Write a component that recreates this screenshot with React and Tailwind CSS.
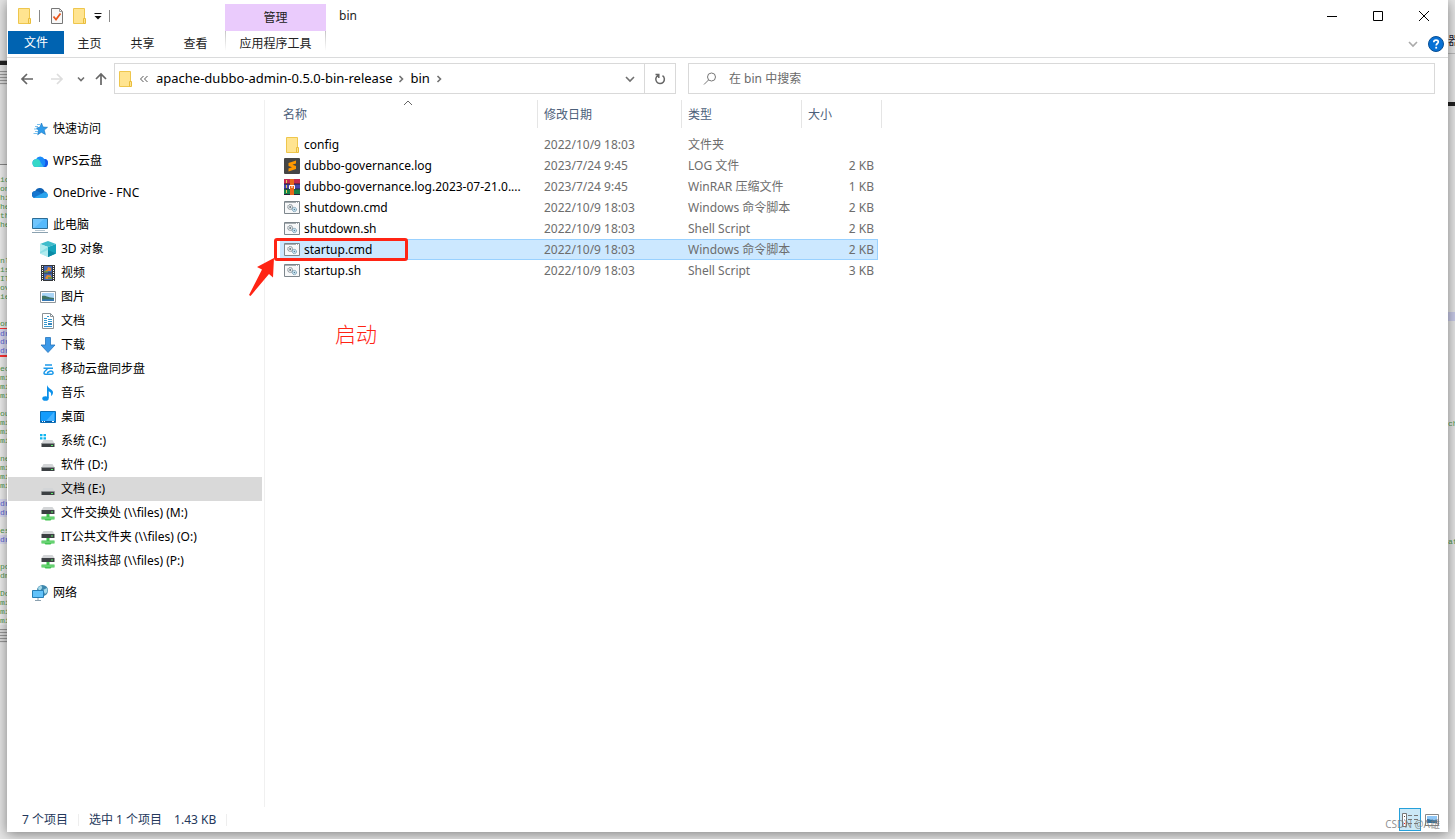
import { useState } from 'react'

const files = [
  { name: 'config', date: '2022/10/9 18:03', type: '文件夹', size: '', icon: 'folder' },
  { name: 'dubbo-governance.log', date: '2023/7/24 9:45', type: 'LOG 文件', size: '2 KB', icon: 'sublime' },
  { name: 'dubbo-governance.log.2023-07-21.0....', date: '2023/7/24 9:45', type: 'WinRAR 压缩文件', size: '1 KB', icon: 'rar' },
  { name: 'shutdown.cmd', date: '2022/10/9 18:03', type: 'Windows 命令脚本', size: '2 KB', icon: 'script' },
  { name: 'shutdown.sh', date: '2022/10/9 18:03', type: 'Shell Script', size: '2 KB', icon: 'script' },
  { name: 'startup.cmd', date: '2022/10/9 18:03', type: 'Windows 命令脚本', size: '2 KB', icon: 'script' },
  { name: 'startup.sh', date: '2022/10/9 18:03', type: 'Shell Script', size: '3 KB', icon: 'script' },
]

const navGroups = [
  [{ label: '快速访问', icon: 'star' }],
  [{ label: 'WPS云盘', icon: 'wps' }],
  [{ label: 'OneDrive - FNC', icon: 'onedrive' }],
  [
    { label: '此电脑', icon: 'pc' },
    { label: '3D 对象', icon: 'cube', child: true },
    { label: '视频', icon: 'video', child: true },
    { label: '图片', icon: 'picture', child: true },
    { label: '文档', icon: 'doc', child: true },
    { label: '下载', icon: 'download', child: true },
    { label: '移动云盘同步盘', icon: 'cloud', child: true },
    { label: '音乐', icon: 'music', child: true },
    { label: '桌面', icon: 'desktop', child: true },
    { label: '系统 (C:)', icon: 'system', child: true },
    { label: '软件 (D:)', icon: 'drive', child: true },
    { label: '文档 (E:)', icon: 'drive', child: true, active: true },
    { label: '文件交换处 (\\\\files) (M:)', icon: 'netdrive', child: true },
    { label: 'IT公共文件夹 (\\\\files) (O:)', icon: 'netdrive', child: true },
    { label: '资讯科技部 (\\\\files) (P:)', icon: 'netdrive', child: true },
  ],
  [{ label: '网络', icon: 'network' }],
]

// Editor text peeking out from behind the window, one entry per line
const codeLines = [
  'ic', 'on', 'hi', 'he', 'th', 'he', '', '', '', 'nl', 'is', 'IT', 'ov', 'ie', '', '',
  'on', '*dr', '*dr', '*dr', '', 'ec', 'mi', 'mi', 'mi', '', 'ou', 'mi', 'mi', 'mi', '',
  'ne', 'mi', 'mi', 'mi', '', '*dr', '*dr', '', 'es', '*dr', '', '', 'po', 'dm', '',
  'Do', 'mi', 'mi', 'mi',
]

const drive = (
  <>
    <path d="M3.500 7h9l2 3.500h-13z" fill="#d3d5d7" />
    <path d="M1.500 10.500h13V14h-13z" fill="#3c4043" />
    <path d="M1.500 10.500h13" stroke="#8c9093" />
    <path d="M11 12h2v1h-2z" fill="#5cf06a" />
  </>
)

const art = {
  folder: (
    <>
      <path d="M2.500.5h11v15h-11z" fill="#ffe490" stroke="#eec64d" />
      <path d="M12.500 10.500h2v5h-2z" fill="#ffe490" stroke="#e9bd3c" />
    </>
  ),
  sublime: (
    <>
      <rect width="16" height="16" rx="1" fill="#454545" />
      <path d="M12 2.500 4.500 5v3L8 9.200l-3.500 1.300v3L12 11V8L8.500 6.800 12 5.500z" fill="#ff9800" />
    </>
  ),
  rar: (
    <>
      <path d="M0 0h16v5H0z" fill="#c42a50" />
      <path d="M0 5h16v5H0z" fill="#4548ad" />
      <path d="M0 10h16v5.500H0z" fill="#168449" />
      <path d="M0 5h16M0 10h16M0 15.500h16" stroke="#29213b" />
      <path d="M6 0h4v16H6z" fill="#e8681c" />
      <path d="M2.500 1v3M2.500 6v3M2.500 11v3" stroke="#e8c95a" />
      <path d="M5.500 10V6.500h5V10M8 6.500V9" fill="none" stroke="#fff" />
    </>
  ),
  script: (
    <>
      <path d="M.5 1.500h15v12H.5z" fill="#f7f8f9" stroke="#7d868c" />
      <path d="M1 2.500h14" stroke="#a6adb1" />
      <path d="M12 2.500h1M14 2.500h1" stroke="#fff" />
      <circle cx="6.200" cy="7" r="2.500" fill="#dfe5e8" stroke="#7b858c" strokeDasharray="1.300 .4" />
      <circle cx="6.200" cy="7" r=".9" fill="#6c777e" />
      <circle cx="10.400" cy="9.500" r="2.100" fill="#cfeaf6" stroke="#6c92aa" strokeDasharray="1.200 .4" />
      <circle cx="10.400" cy="9.500" r=".8" fill="#5a7d93" />
    </>
  ),
  star: (
    <>
      <path d="m9.500 2 1.500 4 4.500.3-3.300 2.800 1.200 4.400-4.100-2.200-3.600 2.500.8-4.400-2-2.400 3.400-.8z" fill="#2f9ceb" stroke="#1372bd" strokeWidth=".6" />
      <path d="M5 3.500h3M3 5.500h3M2 8h3M3 10.500h3M1.500 12.500h4" stroke="#58b1ea" strokeWidth=".8" />
    </>
  ),
  wps: (
    <>
      <path d="M4.800 14A3.900 3.900 0 0 1 4 6.200 4.600 4.600 0 0 1 12.300 6 4 4 0 0 1 11.500 14z" fill="#1a8bfa" />
      <path d="M4.800 14A3.900 3.900 0 0 1 4 6.200c2.500-.6 4 1 4.500 3 .5 2 1.500 4 3 4.800z" fill="#35d8c8" />
      <path d="M5 14c3.500 0 4-3.500 3.500-5l3 5z" fill="#3ab5ef" />
      <path d="M12.300 6A4 4 0 0 1 11.500 14c2-1.500 2.500-5 .8-8z" fill="#1556e8" />
    </>
  ),
  onedrive: (
    <>
      <path d="M3.500 13A3.500 3.500 0 0 1 3.200 6 5 5 0 0 1 12.500 6.500a3.300 3.300 0 0 1 .3 6.500z" fill="#0f62b5" />
      <path d="M3 6.200C6 5.500 8 7.800 10 9l-7.500 4A3.500 3.500 0 0 1 3 6.200z" fill="#1576cf" />
      <path d="m2 12.500 8-4c3-2.500 6-.5 6 1.800a2.700 2.700 0 0 1-2.700 2.700H3.500z" fill="#2aa4ee" />
    </>
  ),
  pc: (
    <>
      <path d="M.5 1.500h15v10H.5z" fill="#55b9fb" stroke="#2c6c95" />
      <path d="M1 2h11L2 11H1z" fill="#80cdff" opacity=".6" />
      <path d="M3 13.500h10" stroke="#b6c7d2" />
      <path d="M0 15.500h16" stroke="#8ba1b0" />
    </>
  ),
  cube: (
    <>
      <path d="M0 3 8 0l8 3-8 3z" fill="#3fbccb" />
      <path d="M0 3l8 3v10l-8-3.500z" fill="#8fe0e6" />
      <path d="M16 3 8 6v10l8-3.500z" fill="#15a3bb" />
      <path d="M0 3l8 3-8 5zM0 12.500 8 9v7z" fill="#c9f3f5" opacity=".6" />
      <path d="M16 12.500 8 9v7z" fill="#0b8aa5" />
    </>
  ),
  video: (
    <>
      <path d="M1 0h14v16H1z" fill="#34373b" />
      <path d="M4 1h8v6.500H4zM4 8.500h8V15H4z" fill="#4568b5" />
      <path d="M5 5h2l1-3 3 1v3H6zM5 13l2-3 4 .5V14H6z" fill="#df8a32" />
      <path d="M4 6h4v1.500H4zM8 12h4v2H8z" fill="#6d944b" />
      <path d="M2.500 1v15M13.500 1v15" stroke="#fff" strokeDasharray="1 1" />
    </>
  ),
  picture: (
    <>
      <path d="M.5 2.500h15v11H.5z" fill="#fff" stroke="#8e969b" />
      <path d="M2 4h12v8H2z" fill="#a9d5f7" />
      <path d="M2 7c4-1 6 2 12 2v3H2z" fill="#3f7564" />
      <path d="M2 10.500c4-.5 8 0 12-.5v2H2z" fill="#3578b5" />
    </>
  ),
  doc: (
    <>
      <path d="M2.500.5h8l3 3v12h-11z" fill="#fff" stroke="#8a9297" />
      <path d="M10.500.5v3h3" fill="none" stroke="#8a9297" />
      <path d="M7 3.500h2M4 5.500h3M4 7.500h3M8 6.500h4M8 8.500h4M4 9.500h3M4 11.500h3M4 13.500h8" stroke="#3598ce" />
      <path d="M8 10h4v2H8z" fill="#3c87bb" />
    </>
  ),
  download: <path d="M5.500.5h5V8h4.500l-7 7.500L1 8h4.500z" fill="#3c99e8" stroke="#2675bd" strokeWidth=".8" />,
  cloud: (
    <path d="M5 4h7M3.500 7.300h9.500M7.500 7.500C6.500 9.500 4 10 4 12c0 1 1 1.300 2 1.300h5.500c2.300 0 2-3-.3-3.300-2-.2-2.400 1.300-4.200 1.800" fill="none" stroke="#1c99ea" strokeWidth="1.500" />
  ),
  music: (
    <>
      <path d="M7 0c1 4 6 4 6 7.500 0 1.500-1 3-2 3.500 1-4-2-4.500-3-5v7H7z" fill="#0b90ea" />
      <path d="M8 5v8" stroke="#0b90ea" strokeWidth="1.500" />
      <ellipse cx="5.500" cy="13.500" rx="3.200" ry="2.300" fill="#0b90ea" />
    </>
  ),
  desktop: (
    <>
      <path d="M.5 2.500h15v11H.5z" fill="#149cfb" stroke="#0b6eb6" />
      <path d="M14 3 6 12h8z" fill="#45b2ff" />
      <path d="M1 12.500h14" stroke="#0756a1" />
      <path d="M2 12.500h1M4 12.500h1M12 12.500h2" stroke="#fff" />
    </>
  ),
  system: (
    <>
      {drive}
      <path d="M0 1h2.500v2.300H0zM3.500 1H6v2.300H3.500zM0 4.300h2.500v2.300H0zM3.500 4.300H6v2.300H3.500z" fill="#0fb5f0" />
    </>
  ),
  drive,
  netdrive: (
    <>
      <path d="M3.500 2h9l2 3h-13z" fill="#d3d5d7" />
      <path d="M1.500 5h13v4h-13z" fill="#3c4043" />
      <path d="M11 6.500h2v1h-2z" fill="#5cf06a" />
      <path d="M6.500 9h3v2.500h5v3h-3l-1 1h-5l-1-1h-3v-3h5z" fill="#43c451" />
      <path d="M1.500 13h13" stroke="#8be093" />
    </>
  ),
  network: (
    <>
      <circle cx="10.500" cy="5.500" r="5.500" fill="#3c87ad" />
      <path d="M6 3c2-3 5-2 4 0S8 5 7 6zM11 5l4-2c1 3 0 5-2 6z" fill="#a7daea" />
      <path d="M.5 5.500h11v7H.5z" fill="#62c2fa" stroke="#267db5" />
      <path d="M6 13v2M3 15.500h6" stroke="#8ba1b0" />
    </>
  ),
}

function Icon({ name }) {
  return (
    <svg className="size-4 shrink-0" viewBox="0 0 16 16" aria-hidden="true">
      {art[name]}
    </svg>
  )
}

function Chevron({ d, className = 'text-[#707070]' }) {
  return (
    <svg className={`size-2.5 shrink-0 ${className}`} viewBox="0 0 10 10" fill="none" stroke="currentColor" strokeWidth="1.600" aria-hidden="true">
      <path d={d} />
    </svg>
  )
}

const DOWN = 'M1 3l4 4 4-4'
const RIGHT = 'M3.500 2l3 3-3 3'

function TitleBar() {
  return (
    <header className="flex h-[31px] items-start">
      <div className="flex h-[31px] w-[218px] shrink-0 items-center pl-[9px]">
        <Icon name="folder" />
        <span className="ml-[7px] h-3 w-px bg-[#888]" />
        <button className="ml-[9px]" title="属性">
          <svg className="size-4" viewBox="0 0 16 16">
            <path d="M2.500.5h8l3 3v12h-11z" fill="#f8f8f8" stroke="#777" />
            <path d="M10.500.5v3h3" fill="none" stroke="#999" />
            <path d="m4.500 8.500 2.500 3 4.500-6" fill="none" stroke="#e8561d" strokeWidth="1.800" />
          </svg>
        </button>
        <button className="ml-1.5" title="新建文件夹"><Icon name="folder" /></button>
        <button className="ml-1.5" title="自定义快速访问工具栏">
          <svg className="size-2.5" viewBox="0 0 10 10">
            <path d="M1.500 2.500h7" stroke="#111" />
            <path d="M1.500 5h7L5 8.500z" fill="#111" />
          </svg>
        </button>
        <span className="ml-1.5 h-3 w-px bg-[#888]" />
      </div>
      <div className="mt-1 flex h-[27px] w-[101px] shrink-0 items-center justify-center bg-[#eacbfc]">管理</div>
      <h1 className="flex h-[31px] flex-1 items-center pl-[13px]">bin</h1>
      <div className="flex h-[31px] pr-px">
        <button className="flex w-[46px] items-center justify-center" aria-label="最小化">
          <svg className="size-2.5" viewBox="0 0 10 10" stroke="#000"><path d="M0 5.500h10" /></svg>
        </button>
        <button className="flex w-[46px] items-center justify-center" aria-label="最大化">
          <svg className="size-2.5" viewBox="0 0 10 10" stroke="#000" fill="none"><path d="M.5.5h9v9h-9z" /></svg>
        </button>
        <button className="flex w-[46px] items-center justify-center" aria-label="关闭">
          <svg className="size-2.5" viewBox="0 0 10 10" stroke="#000"><path d="m0 0 10 10M10 0 0 10" /></svg>
        </button>
      </div>
    </header>
  )
}

function Ribbon() {
  return (
    <div className="flex h-[27px] items-start border-b border-[#dadbdc] pl-px">
      <button className="h-[23px] w-14 bg-[#0063b1] text-white">文件</button>
      {['主页', '共享', '查看'].map((tab) => (
        <button key={tab} className="h-[26px] w-[53px] pr-0.5">{tab}</button>
      ))}
      <div className="ml-0.5 flex">
        <span className="h-5 w-px bg-linear-to-b from-[#c4c4c4] to-white" />
        <button className="h-[26px] w-[99px]">应用程序工具</button>
        <span className="h-5 w-px bg-linear-to-b from-[#c4c4c4] to-white" />
      </div>
      <div className="ml-auto flex h-[26px] items-center gap-2.5 pr-1">
        <button aria-label="展开功能区"><Chevron d={DOWN} className="text-[#aaa]" /></button>
        <button aria-label="帮助">
          <svg className="size-4" viewBox="0 0 16 16">
            <circle cx="8" cy="8" r="7.500" fill="#0871d5" stroke="#084f94" />
            <path d="M5.800 6.200C5.800 3.300 10.400 3.400 10.300 6 10.200 7.500 8.200 7.600 8.200 9.500" fill="none" stroke="#fff" strokeWidth="1.700" />
            <path d="M7.300 10.800h1.800v1.800H7.300z" fill="#fff" />
          </svg>
        </button>
      </div>
    </div>
  )
}

function Arrow({ d, className, label }) {
  return (
    <button className={className} aria-label={label}>
      <svg className="size-3.5" viewBox="0 0 14 14" fill="none" stroke="currentColor" strokeWidth="1.700"><path d={d} /></svg>
    </button>
  )
}

function AddressBar() {
  const [query, setQuery] = useState('')

  return (
    <div className="flex h-9 items-end pr-[13px]">
      <div className="flex h-[31px] w-[107px] shrink-0 items-center pl-[13px]">
        <Arrow d="M13 7H2M7 2 2 7l5 5" className="text-[#666]" label="后退" />
        <Arrow d="M1 7h11M7 2l5 5-5 5" className="ml-4 text-[#ddd]" label="前进" />
        <button className="ml-3" aria-label="最近浏览的位置"><Chevron d="M2 3.500l3 3 3-3" /></button>
        <Arrow d="M7 13V2M2 7l5-5 5 5" className="ml-2 text-[#666]" label="向上" />
      </div>
      <div className="flex h-[31px] w-[562px] shrink-0 items-center border border-[#d9d9d9] pl-0.5">
        <Icon name="folder" />
        <button className="ml-1.5 w-[17px] text-[#555]" aria-label="上级文件夹">
          <svg className="size-2.5" viewBox="0 0 10 10" fill="none" stroke="currentColor">
            <path d="M4.500 2l-3 3 3 3M8.500 2l-3 3 3 3" />
          </svg>
        </button>
        <button className="text-[13px] text-black">apache-dubbo-admin-0.5.0-bin-release</button>
        <span className="mx-1 flex"><Chevron d={RIGHT} /></span>
        <button className="text-[13px] text-black">bin</button>
        <span className="ml-1 flex"><Chevron d={RIGHT} /></span>
        <button className="ml-auto mr-[9px]" aria-label="以前的位置"><Chevron d={DOWN} /></button>
        <button className="flex h-full w-[31px] items-center justify-center border-l border-[#d9d9d9]" aria-label="刷新">
          <svg className="size-3" viewBox="0 0 12 12" fill="none" stroke="#666" strokeWidth="1.500">
            <path d="M8.500 2.700A4.300 4.300 0 1 1 4 2.500M1.500 1.500h3.300v3.500" />
          </svg>
        </button>
      </div>
      <label className="ml-3 flex h-[31px] flex-1 items-center border border-[#d9d9d9] pl-3.5">
        <svg className="size-3.5 shrink-0" viewBox="0 0 14 14" fill="none" stroke="#777">
          <circle cx="8.500" cy="5" r="4" />
          <path d="M5.500 8 1 12.500" />
        </svg>
        <input
          className="ml-3 min-w-0 flex-1 bg-transparent outline-none placeholder:text-[#6a6a6a]"
          placeholder="在 bin 中搜索"
          aria-label="搜索"
          value={query}
          onChange={(e) => setQuery(e.target.value)}
        />
      </label>
    </div>
  )
}

function NavPane() {
  return (
    <nav className="mt-1.5 flex w-[258px] shrink-0 flex-col gap-2 border-r border-[#f0f0f0] pt-[17px] pl-px text-black">
      {navGroups.map((group) => (
        <ul key={group[0].label}>
          {group.map((item) => (
            <li key={item.label}>
              <a
                href="#"
                className={`flex h-6 w-[254px] items-center gap-[5px] ${item.child ? 'pl-8' : 'pl-6'} ${item.active ? 'bg-[#d9d9d9]' : ''}`}
              >
                <Icon name={item.icon} />
                {item.label}
              </a>
            </li>
          ))}
        </ul>
      ))}
    </nav>
  )
}

function FileList() {
  const [selected, setSelected] = useState('startup.cmd')

  return (
    <main className="relative mt-1.5 min-w-0 flex-1 pl-[15px]">
      <table className="w-[602px] table-fixed border-separate border-spacing-0 text-left">
        <colgroup>
          <col className="w-[258px]" />
          <col className="w-[144px]" />
          <col className="w-[120px]" />
          <col className="w-[76px]" />
          <col className="w-1" />
        </colgroup>
        <thead className="text-[#4c607a]">
          <tr>
            <th className="relative h-7 border-r border-[#e5e5e5] pt-0.5 pl-[3px] font-normal">
              名称
              <svg className="absolute top-0 left-[123px] h-1.5 w-2.5" viewBox="0 0 10 6" fill="none" stroke="#666">
                <path d="m1 5 4-4 4 4" />
              </svg>
            </th>
            <th className="h-7 border-r border-[#e5e5e5] pt-0.5 pl-1.5 font-normal">修改日期</th>
            <th className="h-7 border-r border-[#e5e5e5] pt-0.5 pl-1.5 font-normal">类型</th>
            <th colSpan={2} className="h-7 border-r border-[#e5e5e5] pt-0.5 pl-1.5 font-normal">大小</th>
          </tr>
          <tr><td className="h-1.5" /></tr>
        </thead>
        <tbody className="text-[#6d6d6d]">
          {files.map((f) => {
            const cell = f.name === selected ? 'border-y border-[#99d1ff] bg-[#cce8ff]' : 'border-y border-transparent'
            return (
              <tr key={f.name} onClick={() => setSelected(f.name)}>
                <td className={`h-[21px] pl-1 ${cell}`}>
                  <div className="flex h-[19px] items-center gap-1 whitespace-nowrap text-black">
                    <Icon name={f.icon} />
                    {f.name}
                  </div>
                </td>
                <td className={`pl-1.5 ${cell}`}>{f.date}</td>
                <td className={`pl-1.5 ${cell}`}>{f.type}</td>
                <td className={`border-r pr-[3px] text-right ${cell}`}>{f.size}</td>
                <td />
              </tr>
            )
          })}
        </tbody>
      </table>

      {/* Markup drawn over the list */}
      <div className="absolute top-[138px] left-[9px] h-[23px] w-[134px] rounded-[3px] border-3 border-[#ff2414]" />
      <svg className="absolute top-[158px] -left-4 h-[38px] w-[25px]" viewBox="0 0 25 38" fill="#ff2414">
        <path d="M25 0 8 9l5 2.500L0 37l1.500 1L20 16l4 3.500z" />
      </svg>
      <p className="absolute top-[218px] left-[70px] text-[21px] leading-8 font-light text-[#ff2414]">启动</p>
    </main>
  )
}

function StatusBar() {
  return (
    <footer className="flex h-[25px] shrink-0 items-center pl-[15px] text-[#24385b]">
      <span>7 个项目</span>
      <span className="mx-2.5 h-3 w-px bg-[#eee]" />
      <span>选中 1 个项目</span>
      <span className="ml-3">1.43 KB</span>
      <span className="ml-2.5 h-3 w-px bg-[#eee]" />
      <div className="relative ml-auto flex items-center gap-1 pr-[9px]">
        <button className="flex h-[23px] w-[22px] items-center justify-center border border-[#26a0da] bg-[#cbe8f6]" aria-label="详细信息">
          <svg className="h-3.5 w-4" viewBox="0 0 16 14" fill="none">
            <path d="M.5.5h4v13h-4z" fill="#fff" stroke="#777" />
            <path d="M2 3.500h1" stroke="#444" />
            <path d="M2 7h1" stroke="#4784bd" />
            <path d="M2 10.500h1" stroke="#e22" />
            <path d="M6 2.500h4M12 2.500h4M6 6.500h4M12 6.500h4M6 10.500h4M12 10.500h4" stroke="#777" />
          </svg>
        </button>
        <button aria-label="大缩略图">
          <svg className="h-3 w-3.5" viewBox="0 0 14 12">
            <path d="M.5.5h13v11H.5z" fill="#fff" stroke="#888" />
            <path d="M2 2h10v7H2z" fill="#8fc6f5" />
            <path d="M2 5c4 0 5 2 10 1v3H2z" fill="#356f9b" />
          </svg>
        </button>
        <span className="pointer-events-none absolute top-2 right-2 text-[10px] leading-4 whitespace-nowrap text-[#777]/80">CSDN @A雄</span>
      </div>
    </footer>
  )
}

function LeftBackdrop() {
  return (
    <div className="h-full w-[7px] shrink-0 overflow-hidden bg-[#e6e6e6] font-['Liberation_Mono',monospace] text-[8px] leading-[9px] text-[#4f9a4f]" aria-hidden="true">
      <div className="h-[61px] border-b border-[#aaa]" />
      <div className="h-1 bg-[#222]" />
      <div className="mt-1.5 h-3.5 bg-[repeating-linear-gradient(#999_0_1px,#ddd_1px_3px)]" />
      <div className="h-20 border-b border-[#888]" />
      <div className="bg-[#efefef] pt-2.5">
        {codeLines.map((line, i) => (
          <p
            key={i}
            className={`h-[9px] ${line[0] === '*' ? 'bg-[#dcdcf2] text-[#5560d8]' : ''} ${i === 17 ? 'border-t border-[#f33]' : ''} ${i === 20 ? 'border-t-2 border-[#f33]' : ''}`}
          >
            {line.replace('*', '')}
          </p>
        ))}
      </div>
      <div className="mt-1 h-3.5 bg-[repeating-linear-gradient(#999_0_1px,#ddd_1px_3px)]" />
    </div>
  )
}

function RightBackdrop() {
  return (
    <div className="h-full w-[7px] shrink-0 overflow-hidden bg-[#e6e6e6] font-['Liberation_Mono','Noto_Sans_CJK_SC',monospace] text-[8px] leading-[9px] text-[#4f9a4f]" aria-hidden="true">
      <p className="h-[54px] border-b border-[#bbb] pt-9 text-xs leading-none text-[#223]">器</p>
      <div className="mt-12 h-1 bg-[#222]" />
      <div className="mt-[206px] h-[9px] bg-[#c9cbe8]" />
      <p className="mt-[98px]">ch</p>
      <p className="mt-[109px]">at</p>
    </div>
  )
}

export default function App() {
  return (
    <div className="flex h-screen flex-col overflow-hidden bg-[#e6e6e6] font-['Noto_Sans','Noto_Sans_CJK_SC',sans-serif] text-xs text-[#222]">
      <div className="flex min-h-0 flex-1">
        <LeftBackdrop />
        <div className="relative flex min-w-0 flex-1 flex-col bg-white shadow-[0_2px_12px_rgba(0,0,0,0.45)]">
          <TitleBar />
          <Ribbon />
          <AddressBar />
          <div className="flex min-h-0 flex-1">
            <NavPane />
            <FileList />
          </div>
          <StatusBar />
        </div>
        <RightBackdrop />
      </div>
      <div className="h-[7px] shrink-0" />
    </div>
  )
}
